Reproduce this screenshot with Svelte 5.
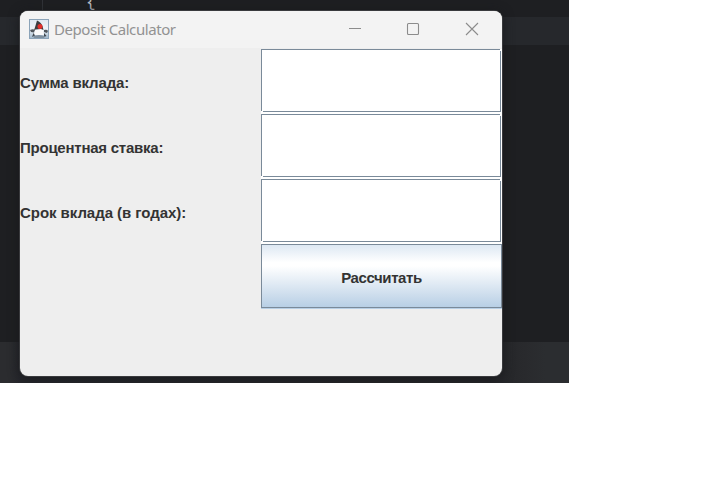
<script>
  const fields = [
    { id: 'amount', label: 'Сумма вклада:', tracking: -0.16 },
    { id: 'rate', label: 'Процентная ставка:', tracking: -0.24 },
    { id: 'term', label: 'Срок вклада (в годах):', tracking: -0.05 }
  ];
  let values = $state({ amount: '', rate: '', term: '' });
</script>

<div class="editor">
  <div class="stripe top"></div>
  <div class="stripe bottom"></div>
  <div class="guide"></div>
  <div class="brace">{'{'}</div>

  <div class="window">
    <header>
      <svg class="logo" width="20" height="20" viewBox="0 0 20 20">
        <defs>
          <linearGradient id="sky" x1="0" y1="0" x2="0" y2="1">
            <stop offset="0" stop-color="#dfe9f1" />
            <stop offset="0.5" stop-color="#eef3f7" />
            <stop offset="1" stop-color="#9db6cb" />
          </linearGradient>
        </defs>
        <rect x=".5" y=".5" width="19" height="19" fill="url(#sky)" stroke="#8ba3b8" />
        <path d="M1 11Q4 9.500 6 11L5 13.500L2 13Z M15 11Q18 10 19 12L18 14L15 13Z" fill="#50565c" />
        <path d="M6 11L14 10L15 16H5Z" fill="#fafafa" />
        <path d="M8 1.500Q12 3 13.500 7L14.500 11L12 10L6.500 10.500L5 11.500Q7 5 8 1.500Z" fill="#3c3e41" />
        <path d="M4.500 14L6 16.500L3 18Z M15 14L17.500 17L15 18Z" fill="#41474e" />
        <path d="M4 17.500Q10 14.500 16 17.500L15 19H5Z" fill="#7f909f" />
        <circle cx="11" cy="7.500" r="2.500" fill="#e3302b" />
      </svg>
      <span class="title">Deposit Calculator</span>
      <div class="controls">
        <svg width="14" height="14" viewBox="0 0 14 14"><path d="M1 6.500H13" /></svg>
        <svg width="14" height="14" viewBox="0 0 14 14"><rect x="1.500" y="1.500" width="11" height="11" rx="1" /></svg>
        <svg width="14" height="14" viewBox="0 0 14 14"><path d="M1 1L13 13M13 1L1 13" /></svg>
      </div>
    </header>
    <form onsubmit={(e) => e.preventDefault()}>
      {#each fields as field}
        <label for={field.id} style="letter-spacing: {field.tracking}px">{field.label}</label>
        <div class="field">
          <input id={field.id} bind:value={values[field.id]} />
        </div>
      {/each}
      <span></span>
      <button type="submit">Рассчитать</button>
    </form>
  </div>
</div>

<style>
  :global(body) {
    background: #fff;
    overflow: hidden;
  }
  .editor {
    position: relative;
    width: 569px;
    height: 383px;
    box-sizing: border-box;
    padding: 11px 0 0 20px;
    background: #1e1f22;
    overflow: hidden;
  }
  .stripe {
    position: absolute;
    left: 0;
    right: 0;
    background: #26282c;
  }
  .top {
    top: 17px;
    height: 28px;
  }
  .bottom {
    top: 342px;
    bottom: 0;
    background: linear-gradient(90deg, #2b2c2f 0 9px, #26272c 20px, #242528 490px, #292a2d 525px, #2b2d30 545px);
  }
  .guide {
    position: absolute;
    left: 42px;
    top: 0;
    width: 1px;
    height: 11px;
    background: #313338;
  }
  .brace {
    position: absolute;
    left: 86px;
    top: -6px;
    font: 16px/18px "Liberation Mono", monospace;
    color: #bcbec4;
  }
  .window {
    position: relative;
    width: 482px;
    height: 365px;
    border-radius: 8px;
    background: #eee;
    overflow: hidden;
    box-shadow: 0 0 0 1px #393a3d, 0 2px 12px #17181b;
  }
  header {
    height: 37px;
    display: flex;
    align-items: center;
    box-sizing: border-box;
    padding: 0 23px 1px 9px;
    background: #f3f3f3;
  }
  .title {
    margin-left: 5px;
    padding-bottom: 1px;
    font: 15px/20px "Noto Sans", "Open Sans", sans-serif;
    letter-spacing: -0.43px;
    color: #929292;
    white-space: nowrap;
  }
  .controls {
    display: flex;
    gap: 44.500px;
    margin-left: auto;
  }
  .controls svg {
    fill: none;
    stroke: #8c8c8c;
    stroke-width: 1.100;
  }
  .controls svg:nth-child(2) {
    margin: 0 0.500px 0 -0.500px;
  }
  form {
    display: grid;
    grid-template-columns: 241px 241px;
    grid-template-rows: repeat(4, 65px);
    padding-top: 1px;
  }
  label {
    align-self: center;
    padding-top: 3px;
    color: #333;
    font: bold 15px/18px "Liberation Sans", sans-serif;
    white-space: nowrap;
  }
  .field {
    position: relative;
    background: #fff;
    padding: 0 1px 2px 0;
  }
  .field::before,
  .field::after {
    content: "";
    position: absolute;
    background: #fff;
  }
  .field::before {
    left: 0;
    top: 62px;
    width: 2px;
    height: 1px;
  }
  .field::after {
    right: 1px;
    top: 0;
    width: 1px;
    height: 2px;
  }
  input {
    display: block;
    width: 240px;
    height: 63px;
    box-sizing: border-box;
    border: 1px solid #7a8a99;
    border-radius: 0;
    padding: 0 4px;
    background: #fff;
    outline: none;
    font: 15px "Liberation Sans", sans-serif;
  }
  button {
    width: 241px;
    height: 64px;
    box-sizing: border-box;
    border: 1px solid #7a8a99;
    border-radius: 0;
    box-shadow: 0 1px #b8cfe5;
    padding: 4px 0 0;
    background: linear-gradient(#dde8f3 0%, #fff 28%, #fff 34%, #b8cfe5 100%);
    color: #333;
    font: bold 15px/18px "Liberation Sans", sans-serif;
    letter-spacing: -0.4px;
  }
</style>
